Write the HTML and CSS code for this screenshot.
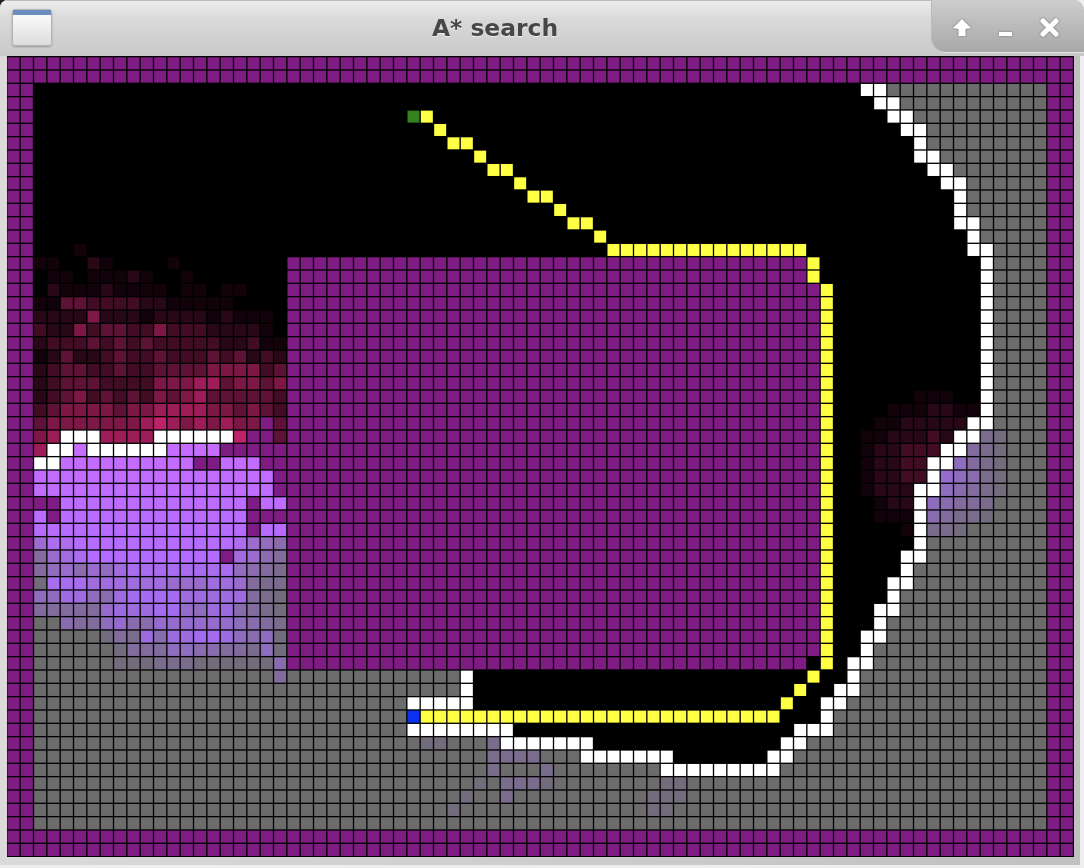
FILE: index.html
```html
<!DOCTYPE html>
<html lang="en">
<head>
<meta charset="utf-8">
<title>A* search</title>
<link rel="stylesheet" href="styles.css">
</head>
<body>
<div class="window">
  <header class="titlebar">
    <div class="app-icon"><div class="app-icon-bar"></div></div>
    <h1 class="title">A* search</h1>
    <div class="controls">
      <svg class="ctl" width="18" height="18" viewBox="0 0 18 18"><path class="glyph" d="M9 0 L18 9 L12.5 10 L12.5 17 L5.5 17 L5.5 10 L0 9 Z"/></svg>
      <svg class="ctl ctl-min" width="15" height="6" viewBox="0 0 15 6"><rect class="glyph" x="1" y="1" width="13" height="4"/></svg>
      <svg class="ctl" width="19" height="19" viewBox="0 0 19 19"><path class="glyph-line" d="M3 3 L16 16 M16 3 L3 16"/></svg>
    </div>
  </header>
  <main class="frame"><div class="viewport"><div id="grid" class="grid"></div></div></main>
</div>
<script src="grid.js"></script>
</body>
</html>
```
FILE: styles.css
```css
* { box-sizing: border-box; }
html, body { margin: 0; padding: 0; width: 1084px; height: 868px; overflow: hidden; }
html { background: linear-gradient(90deg, #222 50%, #eee 50%); }
.window {
  width: 1084px; height: 868px;
  display: flex; flex-direction: column;
  background: #cfcfcf;
  border-radius: 8px 10px 0 0;
  overflow: hidden;
}
.titlebar {
  height: 56px; flex: none;
  display: flex; align-items: stretch;
  background: linear-gradient(#ededed, #d9d9d9 35%, #c9c9c9);
  box-shadow: inset 0 1px 0 #bdbdbd;
}
.app-icon {
  width: 40px; height: 37px;
  margin: 9px 0 0 12px; flex: none;
  border: 1px solid #b5b5b5;
  border-radius: 3px;
  background: linear-gradient(#ffffff, #dcdcdc);
  box-shadow: 0 1px 2px #999;
}
.app-icon-bar { height: 5px; background: #6c8dc0; }
.title {
  flex: 1; margin: 0; padding: 6px 0 0 6px;
  text-align: center;
  font: bold 23.4px/44px "DejaVu Sans", sans-serif;
  color: #474747;
  text-shadow: 0 1px 1px #eee;
  filter: blur(0.4px);
}
.controls {
  width: 152px; height: 52px; flex: none;
  display: flex; align-items: center; gap: 27px;
  padding: 3px 0 0 21px;
  background: linear-gradient(#cdcdcd, #a8a8a8);
  border-bottom-left-radius: 14px;
  box-shadow: -1px 0 0 #bbb, 0 1px 0 #e2e2e2;
}
.ctl { flex: none; filter: blur(0.4px) drop-shadow(0 0 1px #707070); }
.ctl-min { margin-top: 13px; }
.glyph { fill: #fff; }
.glyph-line { fill: none; stroke: #fff; stroke-width: 5; stroke-linecap: round; }
.frame {
  flex: 1; min-height: 0;
  padding: 0 3px 0 7px;
  background: linear-gradient(90deg, #dadada, #c0c0c0);
  border-right: 4px solid #eee;
  border-bottom: 3px solid #eee;
}
.viewport {
  width: 1067px; height: 801px;
  background: #000;
  overflow: hidden;
}
.grid {
  width: 800px; height: 600px;
  display: grid;
  grid-template-columns: repeat(80, 9px);
  grid-template-rows: repeat(60, 9px);
  gap: 1px;
  transform-origin: 0 0;
  transform: translate(0.5px, 1.3px) scale(1.33333);
  filter: blur(0.32px);
}
.grid > span { display: block; }
.wall { background: #7e1c84; }
.open { background: #000; }
.free { background: #6c6c6c; }
.edge { background: #fff; }
.path { background: #ffff44; }
.goal { background: #34821e; }
.start { background: #0a32f0; }
```
FILE: grid.js
```js
// A* search state: 80 x 60 cells.
var COLS = 80, ROWS = 60;
var grid = [];
var r, c;

function setCell(row, col, value) { grid[row][col] = value; }
function setRun(row, from, to, value) {
  for (var k = from; k <= to; k++) setCell(row, k, value);
}

for (r = 0; r < ROWS; r++) {
  grid.push([]);
  for (c = 0; c < COLS; c++) {
    var border = r < 2 || r >= 58 || c < 2 || c >= 78;
    grid[r].push(border ? "wall" : "free");
  }
}

// Frontier cells per row
var edges = {
  2:[64,65],3:[65,66],4:[66,67],5:[67,68],6:[68],7:[68,69],8:[69,70],9:[70,71],
  10:[71],11:[71],12:[71,72],13:[72],14:[72,73],
  15:[73],16:[73],17:[73],18:[73],19:[73],20:[73],21:[73],22:[73],23:[73],24:[73],25:[73],26:[73],
  27:[72,73],28:[71,72],29:[70,71],30:[69,70],31:[69],32:[68,69],33:[68],34:[68],35:[68],36:[68],
  37:[67,68],38:[67],39:[66,67],40:[66],41:[65,66],42:[65],43:[64,65],44:[64],45:[63,64],46:[63],
  47:[62,63],48:[61,62],49:[61],50:[59,60,61],51:[58,59],52:[57,58],53:[]
};

// Explored (black) area reaches from the left wall to the frontier
for (r = 2; r <= 45; r++) {
  var list = edges[r] || [];
  if (list.length) setRun(r, 2, list[0] - 1, "open");
}
// Lower explored pocket
setRun(46, 35, 62, "open");
setRun(47, 35, 61, "open");
setRun(48, 35, 60, "open");
setRun(49, 31, 60, "open");
setRun(50, 38, 58, "open");
setRun(51, 44, 57, "open");
setRun(52, 50, 56, "open");

for (r in edges) {
  edges[r].forEach(function (col) { setCell(+r, col, "edge"); });
}
setRun(46, 34, 34, "edge");
setRun(47, 34, 34, "edge");
setRun(48, 30, 34, "edge");
setRun(50, 30, 37, "edge");
setRun(51, 37, 43, "edge");
setRun(52, 43, 49, "edge");
setRun(53, 49, 57, "edge");

// Rows under the left explored area are free until the central wall
for (r = 30; r <= 45; r++) setRun(r, 2, 20, "free");

// Central obstacle
for (r = 15; r <= 45; r++) setRun(r, 21, r === 45 || r < 17 ? 59 : 60, "wall");

// Heat over the left area: 0-9 red, W frontier, L lavender, P wall
var HEAT = {
  14:"0001000000000000000",15:"1100210000100000000",16:"0110111210010000000",
  17:"0211121111011011000",18:"1144333322111110000",19:"2222522212222121110",
  20:"3225344335333222210",21:"2333434343333322311",22:"1242234334333434232",
  23:"2344334334444555534",24:"2344433335556645545",25:"2345343435456444443",
  26:"3455554556666554543",27:"45555555676565655P4",28:"56WWW6666WWWWWW7PP4",
  29:"6WWLWWWWWWLLLLPPPPP",30:"WWLLLLLLLLLLPPLLLPP",31:"LLLLLLLLLLLLLLLLLLP",
  32:"LLLLLLLLLLLLLLLLLLP",33:"PPLLLLLLLLLLLLLLPLL",34:"LPLLLLLLLLLLLLLLPPP",
  35:"LLLLLLLLLLLLLLLLPLL"
};
// Lavender fading into free cells: 0-9 is strength
var FADE = {
  36:"6889999999999998654",37:"36789999999999P7643",
  38:"3564657888888885432",39:"1888777777666776322",40:"5577547888877777321",
  41:"3333367778865774321",42:"0043356446666665432",43:"0000013274778875451",
  44:"0000001333554433251",45:"0000001112221111114"
};
// Sparse patches: [row, firstCol, digits]
var RED = [
  [25,68,"111"],[26,66,"1112211"],[27,65,"1122222"],[28,64,"1122232"],[29,64,"122333"],
  [30,64,"12233"],[31,64,"12233"],[32,64,"1222"],[33,65,"122"],[34,65,"111"],[35,67,"1"]
];
var LAV = [
  [28,73,"21"],[29,72,"321"],[30,71,"5321"],[31,70,"65421"],[32,70,"54321"],
  [33,69,"54332"],[34,69,"43221"],[35,69,"221"],
  [46,20,"3"],[51,31,"11"],[51,36,"2"],[52,36,"2222"],[53,36,"2"],[53,40,"2"],
  [54,35,"1"],[54,37,"2221"],[54,49,"11"],[55,34,"1"],[55,37,"2"],[55,48,"111"],
  [56,33,"1"],[56,48,"11"]
];

function mix(a, b, t) { return Math.round(a + (b - a) * t); }
function red(d) {
  var t = Math.pow(d / 5.8, 1.25);
  return "rgb(" + mix(0, 150, t) + "," + mix(0, 28, t) + "," + mix(0, 84, t) + ")";
}
// Lavender shifts bluer lower down
function lavender(row, d) {
  var t = d / 9;
  var shift = Math.max(0, Math.min(1, (row - 29) / 12));
  var lr = mix(198, 170, shift);
  return "rgb(" + mix(108, lr, t) + "," + mix(108, 108, t) + "," + mix(108, 255, t) + ")";
}

var tint = {};
function key(row, col) { return row + ":" + col; }

Object.keys(HEAT).forEach(function (row) {
  row = +row;
  HEAT[row].split("").forEach(function (ch, i) {
    var col = i + 2;
    if (/[0-9]/.test(ch)) {
      setCell(row, col, "open");
      if (ch !== "0") tint[key(row, col)] = red(+ch);
    } else if (ch === "W") setCell(row, col, "edge");
    else if (ch === "P") setCell(row, col, "wall");
    else { setCell(row, col, "free"); tint[key(row, col)] = lavender(row, 9); }
  });
});
Object.keys(FADE).forEach(function (row) {
  row = +row;
  FADE[row].split("").forEach(function (ch, i) {
    var col = i + 2;
    if (ch === "P") setCell(row, col, "wall");
    else if (ch !== "0") tint[key(row, col)] = lavender(row, +ch);
  });
});
RED.forEach(function (p) {
  p[2].split("").forEach(function (ch, i) { tint[key(p[0], p[1] + i)] = red(+ch); });
});
LAV.forEach(function (p) {
  p[2].split("").forEach(function (ch, i) { tint[key(p[0], p[1] + i)] = lavender(41, +ch); });
});

// Final path
[[4,31],[5,32],[6,33],[6,34],[7,35],[8,36],[8,37],[9,38],[10,39],[10,40],[11,41],[12,42],[12,43],[13,44],
 [15,60],[16,60],[46,60],[47,59],[48,58]].forEach(function (p) { setCell(p[0], p[1], "path"); });
setRun(14, 45, 59, "path");
for (r = 17; r <= 45; r++) setCell(r, 61, "path");
setRun(49, 31, 57, "path");
setCell(4, 30, "goal");
setCell(49, 30, "start");

var host = document.getElementById("grid");
var frag = document.createDocumentFragment();
for (r = 0; r < ROWS; r++) {
  for (c = 0; c < COLS; c++) {
    var cell = document.createElement("span");
    cell.className = grid[r][c];
    var k = key(r, c);
    if (tint[k] && grid[r][c] !== "edge" && grid[r][c] !== "wall" && grid[r][c] !== "path") cell.style.background = tint[k];
    frag.appendChild(cell);
  }
}
host.appendChild(frag);
```
